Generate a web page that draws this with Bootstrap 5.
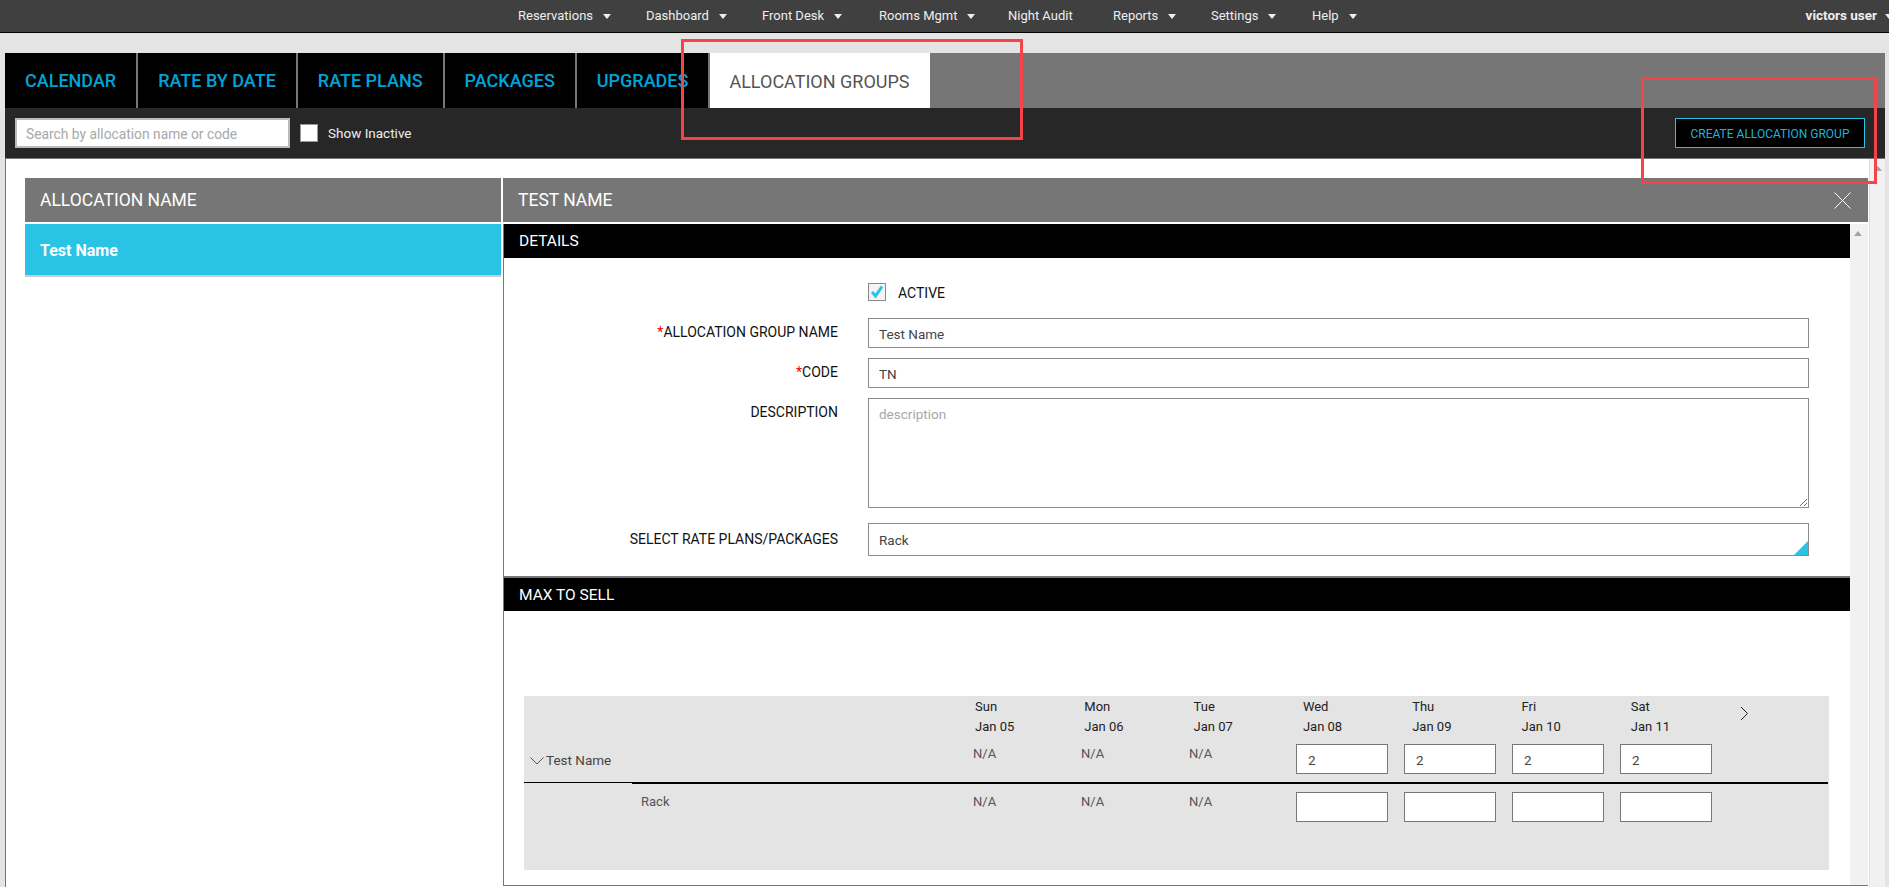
<!DOCTYPE html>
<html lang="en">
<head>
<meta charset="utf-8">
<title>Allocation Groups</title>
<link href="https://cdn.jsdelivr.net/npm/bootstrap@5.3.0/dist/css/bootstrap.min.css" rel="stylesheet">
<style>
html,body{height:887px;overflow:hidden}
body{background:#e4e4e4;font-family:Roboto,"Liberation Sans",sans-serif;font-size:14px;color:#222;position:relative}
.topbar{height:33px;background:#404040;border-bottom:1px solid #000;padding:0}
.toplink{position:relative;color:#eee;font-size:13px;line-height:31px;white-space:nowrap;text-decoration:none}
.toplinks{margin-left:518px;gap:0}
.caret-d{display:inline-block;width:0;height:0;border-left:4px solid transparent;border-right:4px solid transparent;border-top:5px solid #eee;margin-left:10px;vertical-align:middle}
.t1{width:128px}.t2{width:116px}.t3{width:117px}.t4{width:129px}.t5{width:105px}.t6{width:98px}.t7{width:101px}
.topuser{margin-left:auto;margin-right:-4px;font-weight:700;font-size:13.500px;color:#eee}
.topuser .caret-d{margin-left:8px}
.appframe{margin:20px 4px 0 5px}
.tabband{background:#767676;height:55px}
.tabitem{background:#000;height:55px;color:#00a3d6;font-size:18px;font-weight:500;line-height:55px;padding:0 20px;border-right:2px solid #777;text-decoration:none;display:block;white-space:nowrap}
.tabitem.tabon{background:#fff;color:#555;font-weight:400;border-right:0;padding:0 19px;width:220px;font-size:18px;line-height:57px}
.toolrow{background:#272727;height:51px;border-bottom:1px solid #767676;padding:10px 20px 0 10px}
.searchbox.form-control{width:275px;height:30px;border-radius:0;border:2px solid #bbb;font-size:13.800px;padding:2px 9px 0;color:#555}
.searchbox::placeholder,.areabox::placeholder{color:#a8a8a8;opacity:1}
.blankcheck{width:18px;height:18px;background:#fff;border:1px solid #999;margin-left:10px;margin-right:10px}
.inactlabel{color:#eee;font-size:13.500px;padding-top:1px}
.createbtn.btn{background:#000;border:1px solid #29c3e6;border-radius:0;color:#1ab3dd;font-size:12px;height:30px;width:190px;padding:1px 0 0;line-height:28px}
.workarea{background:#fff;height:728px;border-left:1px solid #767676;padding:19px 0 0 19px;overflow:hidden;position:relative}
.leftcol{width:476px;flex:none}
.rightcol{width:1365px;flex:none;margin-left:2px;height:708px;position:relative}
.greyhead{background:#767676;color:#fff;height:44px;line-height:44px;font-size:17.500px;font-weight:400;padding:0 15px}
.headpad{padding-right:17px}
.activerow{background:#29c3e6;color:#fff;font-weight:700;font-size:16px;height:53px;line-height:54px;margin-top:2px;padding:0 15px;border-bottom:2px solid #ccc}
.rightbody{margin-top:2px;height:662px;border-left:1px solid #767676;border-bottom:1px solid #767676;display:flex}
.formpane{width:1346px;flex:none}
.blackbar{background:#000;color:#fff;font-size:15.500px;font-weight:400;height:34px;line-height:35px;padding-left:15px}
.barshort{height:33px;line-height:34px}
.innerscroll{width:18px;flex:none;background:#f1f1f1;position:relative}
.outerscroll{position:absolute;right:0;top:0;bottom:0;width:16px;background:#f1f1f1;border-left:1px solid #e0e0e0}
.uparrow{position:absolute;left:4px;width:0;height:0;border-left:4px solid transparent;border-right:4px solid transparent;border-bottom:5px solid #a3a3a3}
.formrow{display:flex;margin-bottom:10px}
.flabel{width:364px;flex:none;text-align:right;font-size:14px;color:#111;padding:4px 30px 0 0;white-space:nowrap}
.req{color:#e00}
.activetext{font-size:14px;line-height:20px;color:#111}
.fieldbox.form-control{width:941px;height:30px;border-radius:0;border:1px solid #8a8a8a;font-size:13.500px;padding:1px 10px 0;color:#444;flex:none}
textarea.areabox.form-control{width:941px;height:110px;border-radius:0;border:1px solid #8a8a8a;font-size:13.500px;padding:5px 10px;flex:none;resize:both;min-height:0}
.selectbox{width:941px;height:33px;border:1px solid #8a8a8a;font-size:13.500px;padding:0 10px;line-height:33px;color:#444;position:relative;flex:none}
.selectbox::after{content:"";position:absolute;right:0;bottom:0;width:0;height:0;border-left:14px solid transparent;border-bottom:14px solid #29c3e6}
.selectlabel{padding-top:6px}
.checkon{width:18px;height:18px;border:1px solid #8a8a8a;background:#f4f4f4;flex:none}
.sectgap{border-top:2px solid #767676;margin-top:20px}
.sellgrid{background:#e4e4e4;width:1305px;height:174px;margin:85px 0 0 20px;font-size:13px}
.daysrow{display:flex;padding:1px 0 0 451px;height:41px;line-height:20px;color:#222;position:relative}
.daysrow span{width:109.3px;flex:none}
.nextarrow{position:absolute;left:1216px;top:10px;display:block}
.maprow{display:grid;grid-template-columns:108px 340px repeat(7,108px);height:45px;color:#555}
.maprow>div{padding-left:1px}
.maprow>.na1{padding-top:7px}
.groupname{margin-left:-2px;white-space:nowrap;font-size:13.500px}
.maprow>.groupcell{padding-top:13px;color:#444}
.groupchev{margin:7px 0 0 5px;flex:none}
.cellbox.form-control{width:92px;height:30px;border-radius:0;border:1px solid #777;font-size:13.500px;padding:1px 11px 0;color:#444;margin:7px 0 0 -1px}
.rule-parent{height:2px;display:flex;margin-right:1px}
.rule-a{width:108px;height:1px;background:#000}
.rule-b{flex:1;background:#000}
.maprow2{display:grid;grid-template-columns:108px 340px repeat(7,108px);color:#555}
.maprow2>div{padding-left:1px}
.maprow2>.na2{padding-top:8px}
.maprow2>.packname{padding-left:9px}
.cellbox2.form-control{width:92px;height:30px;border-radius:0;border:1px solid #777;margin:8px 0 0 -1px;padding:0}
.spacer25{height:25px}
.spacer364{width:364px;flex:none}
.rowlast{margin-bottom:0}
.formrow.rowactive{margin-bottom:15px}
.formrow.rowarea{margin-bottom:15px}
.formrow.rowlast{margin-bottom:0}
.toolcheck{height:30px}
.arrowtop{top:7px}
.redframe{position:absolute;border:3px solid #f6434a;pointer-events:none}
.redone{left:681px;top:39px;width:342px;height:101px}
.redtwo{left:1641px;top:77px;width:236px;height:107px}
</style>
</head>
<body>
<nav class="topbar d-flex align-items-start">
  <div class="toplinks d-flex">
    <a class="toplink t1" href="#">Reservations<span class="caret-d"></span></a>
    <a class="toplink t2" href="#">Dashboard<span class="caret-d"></span></a>
    <a class="toplink t3" href="#">Front Desk<span class="caret-d"></span></a>
    <a class="toplink t4" href="#">Rooms Mgmt<span class="caret-d"></span></a>
    <a class="toplink t5" href="#">Night Audit</a>
    <a class="toplink t6" href="#">Reports<span class="caret-d"></span></a>
    <a class="toplink t7" href="#">Settings<span class="caret-d"></span></a>
    <a class="toplink" href="#">Help<span class="caret-d"></span></a>
  </div>
  <a class="toplink topuser" href="#">victors user<span class="caret-d"></span></a>
</nav>

<div class="appframe">
  <div class="tabband d-flex">
    <a class="tabitem" href="#">CALENDAR</a>
    <a class="tabitem" href="#">RATE BY DATE</a>
    <a class="tabitem" href="#">RATE PLANS</a>
    <a class="tabitem" href="#">PACKAGES</a>
    <a class="tabitem" href="#">UPGRADES</a>
    <a class="tabitem tabon" href="#">ALLOCATION GROUPS</a>
  </div>
  <div class="toolrow d-flex align-items-start">
    <input class="form-control searchbox" type="text" placeholder="Search by allocation name or code">
    <div class="d-flex align-items-center toolcheck"><span class="blankcheck"></span><span class="inactlabel">Show Inactive</span></div>
    <button class="btn createbtn ms-auto" type="button">CREATE ALLOCATION GROUP</button>
  </div>
  <div class="workarea d-flex align-items-start">
    <div class="leftcol">
      <div class="greyhead">ALLOCATION NAME</div>
      <div class="activerow">Test Name</div>
    </div>
    <div class="rightcol">
      <div class="greyhead headpad d-flex justify-content-between align-items-center"><span>TEST NAME</span>
        <svg width="17" height="17" viewBox="0 0 17 17" fill="none" stroke="#fff" stroke-width="1"><path d="M.5.5l16 16M16.5.5l-16 16"/></svg>
      </div>
      <div class="rightbody">
        <div class="formpane">
          <div class="blackbar">DETAILS</div>
          <div class="spacer25"></div>
          <div class="formrow rowactive">
            <div class="spacer364"></div>
            <div class="checkon d-flex align-items-center justify-content-center">
              <svg width="14" height="14" viewBox="0 0 14 14" fill="none" stroke="#29c3e6" stroke-width="3"><path d="M2 7l3.5 4L12 1.5"/></svg>
            </div>
            <span class="ms-2 ps-1 activetext">ACTIVE</span>
          </div>
          <div class="formrow"><div class="flabel"><span class="req">*</span>ALLOCATION GROUP NAME</div><input class="form-control fieldbox" value="Test Name"></div>
          <div class="formrow"><div class="flabel"><span class="req">*</span>CODE</div><input class="form-control fieldbox" value="TN"></div>
          <div class="formrow rowarea"><div class="flabel">DESCRIPTION</div><textarea class="form-control areabox" placeholder="description"></textarea></div>
          <div class="formrow rowlast"><div class="flabel selectlabel">SELECT RATE PLANS/PACKAGES</div><div class="selectbox">Rack</div></div>
          <div class="sectgap"></div>
          <div class="blackbar barshort">MAX TO SELL</div>
          <div class="sellgrid">
            <div class="daysrow">
              <span>Sun<br>Jan 05</span><span>Mon<br>Jan 06</span><span>Tue<br>Jan 07</span><span>Wed<br>Jan 08</span><span>Thu<br>Jan 09</span><span>Fri<br>Jan 10</span><span>Sat<br>Jan 11</span>
              <svg class="nextarrow" width="9" height="15" viewBox="0 0 9 15" fill="none" stroke="#222" stroke-width="1"><path d="M1 1l6.500 6.500L1 14"/></svg>
            </div>
            <div class="maprow">
              <div class="d-flex align-items-start groupcell"><svg class="me-1 groupchev" width="14" height="8" viewBox="0 0 14 8" fill="none" stroke="#555" stroke-width="1"><path d="M.5.500l6.500 6.500 6.500-6.500"/></svg><span class="groupname">Test Name</span></div>
              <div></div>
              <div class="na1">N/A</div><div class="na1">N/A</div><div class="na1">N/A</div>
              <div><input class="form-control cellbox" value="2"></div><div><input class="form-control cellbox" value="2"></div><div><input class="form-control cellbox" value="2"></div><div><input class="form-control cellbox" value="2"></div>
            </div>
            <div class="rule-parent"><div class="rule-a"></div><div class="rule-b"></div></div>
            <div class="maprow2">
              <div></div>
              <div class="na2 packname">Rack</div>
              <div class="na2">N/A</div><div class="na2">N/A</div><div class="na2">N/A</div>
              <div><input class="form-control cellbox2"></div><div><input class="form-control cellbox2"></div><div><input class="form-control cellbox2"></div><div><input class="form-control cellbox2"></div>
            </div>
          </div>
        </div>
        <div class="innerscroll"><span class="uparrow arrowtop"></span></div>
      </div>
    </div>
    <div class="outerscroll"><span class="uparrow arrowtop"></span></div>
  </div>
</div>
<div class="redframe redone"></div>
<div class="redframe redtwo"></div>
</body>
</html>
